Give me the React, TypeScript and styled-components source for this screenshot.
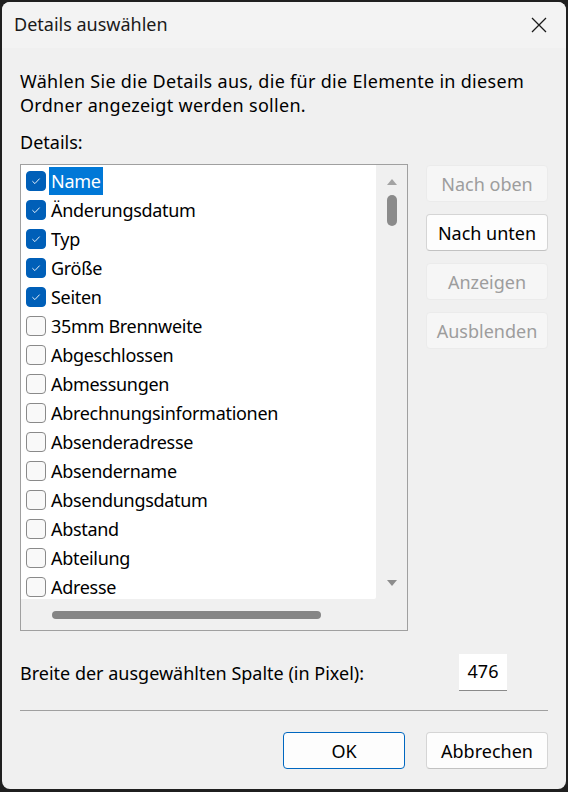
import React from 'react';
import styled, { createGlobalStyle } from 'styled-components';

const GlobalStyle = createGlobalStyle`
  html, body {
    margin: 0;
    padding: 0;
    background: #1f1f1f;
  }
  body {
    font-family: 'Noto Sans', 'Open Sans', sans-serif;
    font-size: 18px;
    color: #000;
  }
`;

const columns = [
  { label: 'Name', checked: true },
  { label: 'Änderungsdatum', checked: true },
  { label: 'Typ', checked: true },
  { label: 'Größe', checked: true },
  { label: 'Seiten', checked: true },
  { label: '35mm Brennweite', checked: false },
  { label: 'Abgeschlossen', checked: false },
  { label: 'Abmessungen', checked: false },
  { label: 'Abrechnungsinformationen', checked: false },
  { label: 'Absenderadresse', checked: false },
  { label: 'Absendername', checked: false },
  { label: 'Absendungsdatum', checked: false },
  { label: 'Abstand', checked: false },
  { label: 'Abteilung', checked: false },
  { label: 'Adresse', checked: false },
];

const sideButtons = [
  { label: 'Nach oben', disabled: true },
  { label: 'Nach unten', disabled: false },
  { label: 'Anzeigen', disabled: true },
  { label: 'Ausblenden', disabled: true },
];

const App = () => {
  return (
    <>
      <GlobalStyle />
      <Window>
        <TitleBar>
          <Title>Details auswählen</Title>
          <CloseButton aria-label="Schließen">
            <svg width="16" height="16" viewBox="0 0 16 16">
              <path d="M1 1 L15 15 M15 1 L1 15" stroke="#1a1a1a" strokeWidth="1.3" fill="none" />
            </svg>
          </CloseButton>
        </TitleBar>
        <Body>
          <Intro>
            Wählen Sie die Details aus, die für die Elemente in diesem
            <br />
            Ordner angezeigt werden sollen.
          </Intro>
          <SectionLabel>Details:</SectionLabel>
          <MainRow>
            <ListBox>
              <ListItems>
                {columns.map((item, i) => (
                  <ListRow key={item.label}>
                    <CheckBox $checked={item.checked}>
                      {item.checked && (
                        <svg width="12" height="12" viewBox="0 0 12 12">
                          <path d="M2.4 6.2 L4.9 8.6 L9.6 3.6" stroke="#fff" strokeWidth="0.9" fill="none" />
                        </svg>
                      )}
                    </CheckBox>
                    <ItemLabel $selected={i === 0}>{item.label}</ItemLabel>
                  </ListRow>
                ))}
              </ListItems>
              <VScroll>
                <svg width="12" height="9" viewBox="0 0 12 9">
                  <path d="M1 8 L6 2 L11 8 Z" fill="#a3a3a3" />
                </svg>
                <VTrack>
                  <VThumb />
                </VTrack>
                <svg width="12" height="9" viewBox="0 0 12 9">
                  <path d="M1 1 L6 7 L11 1 Z" fill="#8d8d8d" />
                </svg>
              </VScroll>
              <HScroll>
                <HThumb />
              </HScroll>
              <ScrollCorner />
            </ListBox>
            <SideButtons>
              {sideButtons.map((b) => (
                <DialogButton key={b.label} disabled={b.disabled}>
                  {b.label}
                </DialogButton>
              ))}
            </SideButtons>
          </MainRow>
          <WidthRow>
            <span>Breite der ausgewählten Spalte (in Pixel):</span>
            <WidthInput>476</WidthInput>
          </WidthRow>
          <Separator />
          <Footer>
            <DialogButton $primary>OK</DialogButton>
            <DialogButton>Abbrechen</DialogButton>
          </Footer>
        </Body>
      </Window>
    </>
  );
};

export default App;

const Window = styled.div`
  margin: 2px;
  width: 564px;
  height: 787px;
  border-radius: 8px;
  overflow: hidden;
  background: #f0f0f0;
  display: flex;
  flex-direction: column;
`;

const TitleBar = styled.div`
  height: 46px;
  flex: none;
  background: #f3f3f3;
  display: flex;
  align-items: center;
  justify-content: space-between;
  padding: 0 19px 2px 12px;
  box-sizing: border-box;
`;

const Title = styled.div`
  font-size: 18px;
  color: #1a1a1a;
`;

const CloseButton = styled.div`
  display: flex;
  width: 16px;
  height: 16px;
  margin-top: 2px;
`;

const Body = styled.div`
  flex: 1;
  display: flex;
  flex-direction: column;
  padding: 21px 18px 0 18px;
`;

const Intro = styled.p`
  margin: 0;
  line-height: 24px;
  letter-spacing: 0.3px;
`;

const SectionLabel = styled.div`
  margin-top: 13px;
  line-height: 24px;
`;

const MainRow = styled.div`
  margin-top: 10px;
  display: flex;
  gap: 18px;
  align-items: flex-start;
`;

const ListBox = styled.div`
  width: 387px;
  height: 465px;
  border: 1px solid #a0a0a0;
  display: grid;
  grid-template-columns: 1fr 31px;
  grid-template-rows: 1fr 31px;
  background: #f0f0f0;
`;

const ListItems = styled.ul`
  list-style: none;
  margin: 0;
  padding: 1px 0 0 0;
  background: #fff;
  overflow: hidden;
  border-bottom-right-radius: 2px;
`;

const ListRow = styled.li`
  height: 29px;
  display: flex;
  align-items: center;
  padding-left: 5px;
`;

const CheckBox = styled.span<{ $checked?: boolean }>`
  width: 20px;
  height: 20px;
  box-sizing: border-box;
  border-radius: 4px;
  display: flex;
  align-items: center;
  justify-content: center;
  flex: none;
  background: ${(p) => (p.$checked ? '#005fb8' : '#f9f9f9')};
  border: 1px solid ${(p) => (p.$checked ? '#005fb8' : '#8a8a8a')};
`;

const ItemLabel = styled.span<{ $selected?: boolean }>`
  margin-left: 3px;
  padding: 0 2px;
  height: 28px;
  line-height: 28px;
  letter-spacing: -0.3px;
  background: ${(p) => (p.$selected ? '#0078d7' : 'transparent')};
  color: ${(p) => (p.$selected ? '#fff' : '#000')};
  white-space: nowrap;
`;

const VScroll = styled.div`
  display: flex;
  flex-direction: column;
  align-items: center;
  padding: 12px 0 11px 0;
  box-sizing: border-box;
`;

const VTrack = styled.div`
  flex: 1;
  display: flex;
  flex-direction: column;
  align-items: center;
  padding-top: 9px;
`;

const VThumb = styled.div`
  width: 10px;
  height: 31px;
  border-radius: 5px;
  background: #8b8b8b;
`;

const HScroll = styled.div`
  display: flex;
  align-items: center;
  padding-left: 31px;
`;

const HThumb = styled.div`
  width: 269px;
  height: 8px;
  border-radius: 4px;
  background: #858585;
  margin-top: 1px;
`;

const ScrollCorner = styled.div``;

const SideButtons = styled.div`
  display: flex;
  flex-direction: column;
  gap: 12px;
  margin-top: 1px;
`;

const DialogButton = styled.button<{ $primary?: boolean }>`
  width: 122px;
  height: 37px;
  box-sizing: border-box;
  border-radius: 4px;
  font-family: inherit;
  font-size: 18px;
  padding: 0;
  background: #fdfdfd;
  color: #000;
  border: 1px solid ${(p) => (p.$primary ? '#0067c0' : '#d5d5d5')};
  border-bottom-color: ${(p) => (p.$primary ? '#0067c0' : '#c2c2c2')};

  &:disabled {
    background: #f6f6f6;
    color: #9d9d9d;
    border-color: #ebebeb;
  }
`;

const WidthRow = styled.div`
  margin-top: 23px;
  display: flex;
  align-items: center;
  justify-content: space-between;
  padding-right: 41px;
`;

const WidthInput = styled.div`
  width: 48px;
  height: 37px;
  box-sizing: border-box;
  background: #fff;
  border-bottom: 1px solid #8a8a8a;
  display: flex;
  align-items: center;
  justify-content: center;
  padding-bottom: 3px;
`;

const Separator = styled.div`
  margin-top: 19px;
  height: 1px;
  width: 528px;
  background: #a0a0a0;
`;

const Footer = styled.div`
  margin-top: 21px;
  display: flex;
  justify-content: flex-end;
  gap: 21px;
`;
